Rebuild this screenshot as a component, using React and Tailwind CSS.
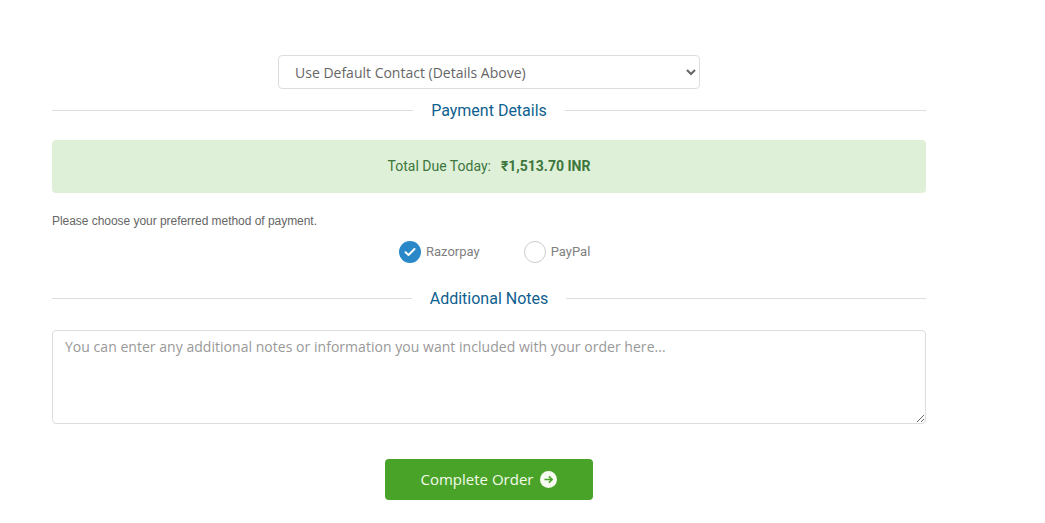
const Divider = ({ label }) => (
  <div className="flex items-center h-[22px]">
    <div className="flex-1 h-px bg-[#dddddd]" />
    <span className="px-[18px] pt-px font-['Roboto',sans-serif] text-[16px] font-normal leading-[22px] text-[#0f5f8f]">{label}</span>
    <div className="flex-1 h-px bg-[#dddddd]" />
  </div>
);

export default function App() {
  return (
    <div className="w-[1045px] h-[523px] overflow-hidden bg-white pl-[52px] pt-[55px]">
      <div className="w-[874px] flex flex-col">
        <div className="flex justify-center">
          <select
            defaultValue="default"
            className="w-[422px] h-[34px] pl-3 pr-2 bg-white border border-[#dddddd] rounded-[4px] font-['Open_Sans',sans-serif] text-[14px] text-[#666666] outline-none"
          >
            <option value="default">Use Default Contact (Details Above)</option>
          </select>
        </div>

        <div className="mt-[10px]">
          <Divider label="Payment Details" />
        </div>

        <div className="mt-[19px] h-[53px] flex items-center justify-center gap-[10px] rounded-[4px] bg-[#dff0d8] font-['Roboto',sans-serif] text-[14px] text-[#3c763d]">
          <span>Total Due Today:</span>
          <strong className="font-bold">₹1,513.70 INR</strong>
        </div>

        <p className="mt-[21px] font-['Liberation_Sans',sans-serif] text-[12px] tracking-[-0.04px] leading-[14px] text-[#666666]">
          Please choose your preferred method of payment.
        </p>

        <div className="mt-[13px] ml-[347px] flex items-center h-[22px] font-['Roboto',sans-serif] text-[13px] text-[#808080]">
          <span className="w-[22px] h-[22px] rounded-full bg-[#2a88c8] flex items-center justify-center">
            <svg width="12" height="10" viewBox="0 0 12 10" fill="none">
              <path d="M1.5 5.2 L4.5 8 L10.5 2" stroke="white" strokeWidth="2" strokeLinecap="round" strokeLinejoin="round" />
            </svg>
          </span>
          <span className="ml-[5px]">Razorpay</span>
          <span className="ml-[44px] w-[22px] h-[22px] rounded-full border border-[#cccccc] bg-white" />
          <span className="ml-[5px]">PayPal</span>
        </div>

        <div className="mt-[24px]">
          <Divider label="Additional Notes" />
        </div>

        <textarea
          placeholder="You can enter any additional notes or information you want included with your order here..."
          className="mt-[21px] block w-full h-[94px] px-3 py-[6px] bg-white border border-[#dddddd] rounded-[4px] font-['Open_Sans',sans-serif] text-[14px] tracking-[0.033px] leading-[20px] text-[#555555] placeholder:text-[#999999] outline-none"
        />

        <div className="mt-[35px] flex justify-center">
          <button className="w-[208px] h-[41px] flex items-center justify-center gap-[7px] rounded-[4px] bg-[#4aa329] font-['Open_Sans',sans-serif] text-[15px] text-[#f4fbe9]">
            <span>Complete Order</span>
            <svg width="17" height="17" viewBox="0 0 16 16">
              <circle cx="8" cy="8" r="8" fill="#f8fcf2" />
              <path d="M4.2 8 H11.3 M8.4 5 L11.4 8 L8.4 11" stroke="#4aa329" strokeWidth="1.5" fill="none" />
            </svg>
          </button>
        </div>
      </div>
    </div>
  );
}
